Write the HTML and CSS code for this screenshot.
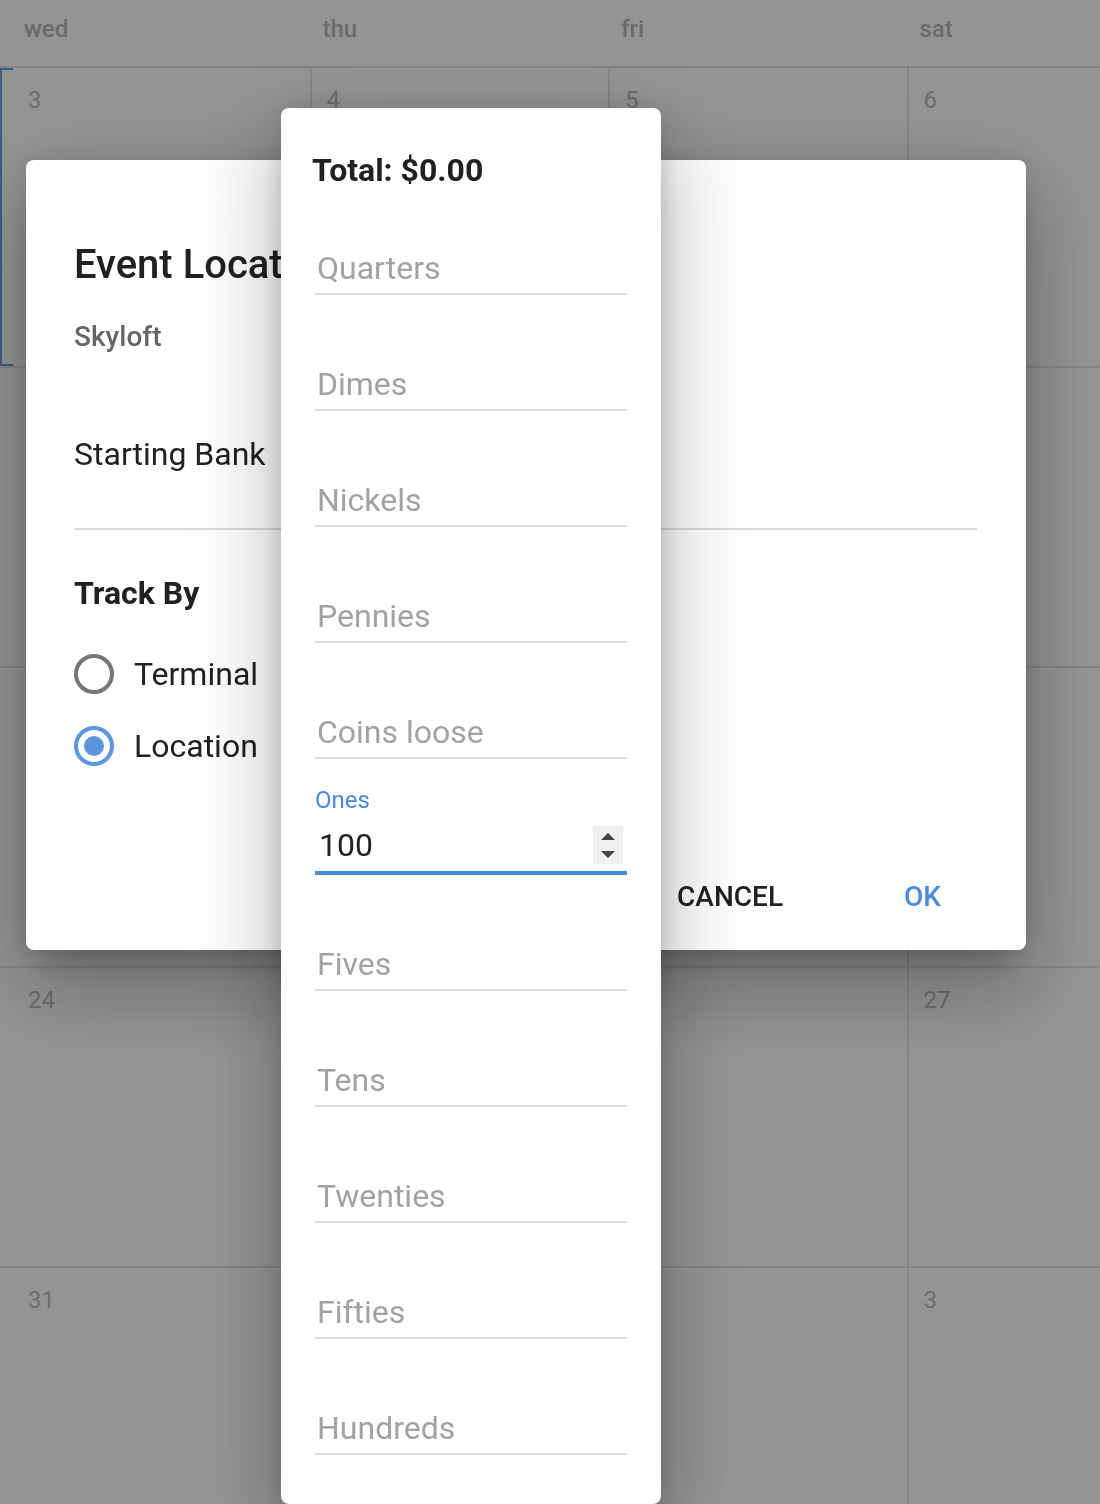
FILE: index.html
```html
<!DOCTYPE html>
<html lang="en">
<head>
    <meta charset="UTF-8">
    <title>Event Location</title>
    <link rel="stylesheet" href="styles.css">
</head>
<body>
    <div class="calendar">
        <div class="cal-head">
            <div></div>
            <div>wed</div>
            <div>thu</div>
            <div>fri</div>
            <div>sat</div>
        </div>
        <div class="cal-grid">
            <div class="cell today"></div><div class="cell">3</div><div class="cell">4</div><div class="cell">5</div><div class="cell">6</div>
            <div class="cell"></div><div class="cell"></div><div class="cell"></div><div class="cell"></div><div class="cell"></div>
            <div class="cell"></div><div class="cell"></div><div class="cell"></div><div class="cell"></div><div class="cell"></div>
            <div class="cell"></div><div class="cell">24</div><div class="cell"></div><div class="cell"></div><div class="cell">27</div>
            <div class="cell"></div><div class="cell">31</div><div class="cell"></div><div class="cell"></div><div class="cell">3</div>
        </div>
    </div>

    <div class="backdrop"></div>

    <!-- dialog du lieu -->
    <div class="dialog location-dialog">
        <h2 class="loc-title">Event Location</h2>
        <div class="loc-name">Skyloft</div>
        <div class="bank-label">Starting Bank</div>
        <div class="bank-input"></div>
        <div class="section-title">Track By</div>
        <div class="radio-group">
            <div class="radio-row"><span class="radio"></span><span>Terminal</span></div>
            <div class="radio-row"><span class="radio checked"></span><span>Location</span></div>
        </div>
        <div class="actions">
            <button class="btn">CANCEL</button>
            <button class="btn btn-primary">OK</button>
        </div>
    </div>

    <!-- dialog de la banque -->
    <div class="dialog bank-dialog">
        <h3 class="total">Total: $0.00</h3>
        <div class="fields">
            <div class="field"><div class="field-input"><span class="placeholder">Quarters</span></div></div>
            <div class="field"><div class="field-input"><span class="placeholder">Dimes</span></div></div>
            <div class="field"><div class="field-input"><span class="placeholder">Nickels</span></div></div>
            <div class="field"><div class="field-input"><span class="placeholder">Pennies</span></div></div>
            <div class="field"><div class="field-input"><span class="placeholder">Coins loose</span></div></div>
            <div class="field focused">
                <div class="field-label">Ones</div>
                <div class="field-input">
                    <span class="value">100</span>
                    <svg class="spinner" width="30" height="38" viewBox="0 0 30 38">
                        <rect width="30" height="38" fill="#efefef"/>
                        <polygon points="8,14 22,14 15,7" fill="#444"/>
                        <polygon points="8,25 22,25 15,32" fill="#444"/>
                    </svg>
                </div>
            </div>
            <div class="field"><div class="field-input"><span class="placeholder">Fives</span></div></div>
            <div class="field"><div class="field-input"><span class="placeholder">Tens</span></div></div>
            <div class="field"><div class="field-input"><span class="placeholder">Twenties</span></div></div>
            <div class="field"><div class="field-input"><span class="placeholder">Fifties</span></div></div>
            <div class="field"><div class="field-input"><span class="placeholder">Hundreds</span></div></div>
        </div>
    </div>
</body>
</html>
```

FILE: styles.css
```css
html, body {
    height: 100%;
}

body {
    margin: 0;
    padding: 0;
    overflow: hidden;
    font-family: Roboto, "Liberation Sans", sans-serif;
    background-color: #ffffff;
}

/* calendrier en fond */
.calendar {
    width: 1100px;
    overflow: hidden;
}

.cal-head {
    display: grid;
    grid-template-columns: 11px repeat(4, 296.5px);
    column-gap: 2px;
    height: 66px;
    border-bottom: 2px solid #e6e6e6;
    background-color: #ffffff;
}

.cal-head div {
    padding: 17px 0 0 11px;
    font-size: 24px;
    line-height: 24px;
    font-weight: 500;
    color: #b8b8b8;
}

.cal-grid {
    display: grid;
    grid-template-columns: 11px repeat(4, 296.5px);
    grid-auto-rows: 298px;
    gap: 2px;
    background-color: #e6e6e6;
}

.cell {
    background-color: #ffffff;
    padding: 20px 0 0 15px;
    font-size: 24px;
    line-height: 24px;
    color: #bcbcbc;
}

.cell.today {
    box-shadow: inset 0 0 0 2px #6c9de6;
}

.backdrop {
    position: fixed;
    top: 0;
    left: 0;
    right: 0;
    bottom: 0;
    background-color: rgba(0, 0, 0, 0.42);
}

/* dialogs */
.dialog {
    position: fixed;
    box-sizing: border-box;
    background-color: #ffffff;
    border-radius: 8px;
    box-shadow: 0 22px 30px -14px rgba(0,0,0,0.2), 0 48px 76px 6px rgba(0,0,0,0.14), 0 18px 92px 16px rgba(0,0,0,0.12), 0 0 24px rgba(0,0,0,0.1);
    color: #212121;
}

.location-dialog {
    left: 26px;
    top: 160px;
    width: 1000px;
    height: 790px;
    padding: 81px 49px 27px 48px;
    display: flex;
    flex-direction: column;
}

.loc-title {
    margin: 0;
    font-size: 40px;
    line-height: 48px;
    font-weight: 500;
    white-space: nowrap;
}

.loc-name {
    margin-top: 32px;
    font-size: 28px;
    line-height: 32px;
    font-weight: 500;
    color: #666666;
}

.bank-label {
    margin-top: 82px;
    font-size: 32px;
    line-height: 38px;
}

.bank-input {
    height: 55px;
    border-bottom: 2px solid #dcdcdc;
}

.section-title {
    margin-top: 44px;
    font-size: 32px;
    line-height: 38px;
    font-weight: 700;
}

.radio-group {
    margin-top: 26px;
}

.radio-row {
    display: flex;
    align-items: center;
    gap: 20px;
    height: 72px;
    font-size: 32px;
}

.radio {
    display: flex;
    align-items: center;
    justify-content: center;
    box-sizing: border-box;
    width: 40px;
    height: 40px;
    border: 4px solid #767676;
    border-radius: 50%;
}

.radio.checked {
    border-color: #5d96dd;
}

.radio.checked::after {
    content: "";
    width: 20px;
    height: 20px;
    border-radius: 50%;
    background-color: #5d96dd;
}

.actions {
    margin-top: auto;
    display: flex;
    justify-content: flex-end;
    gap: 89px;
    padding-right: 20px;
}

.btn {
    padding: 8px 16px;
    border: none;
    background: none;
    font-family: Roboto, "Liberation Sans", sans-serif;
    font-size: 28px;
    line-height: 36px;
    font-weight: 500;
    color: #212121;
}

.btn-primary {
    color: #4a8adb;
}

.bank-dialog {
    left: 281px;
    top: 108px;
    width: 380px;
    padding: 46px 34px 49px;
}

.total {
    margin: 0 0 20px -3px;
    font-size: 32px;
    line-height: 32px;
    font-weight: 700;
}

.fields {
    display: flex;
    flex-direction: column;
    gap: 27px;
}

.field {
    padding-top: 33px;
}

.field.focused {
    padding-top: 0;
}

.field-label {
    height: 28px;
    margin-bottom: 5px;
    font-size: 24px;
    line-height: 28px;
    color: #4a8adb;
}

.field-input {
    display: flex;
    align-items: center;
    height: 54px;
    border-bottom: 2px solid #dcdcdc;
    font-size: 32px;
    line-height: 54px;
}

.field.focused .field-input {
    height: 52px;
    border-bottom: 4px solid #4a8adb;
}

.placeholder {
    padding: 4px 0 0 2px;
    line-height: 50px;
    color: #a2a2a2;
}

.value {
    flex: 1;
    padding-left: 4px;
}

.spinner {
    margin-right: 4px;
}
```
